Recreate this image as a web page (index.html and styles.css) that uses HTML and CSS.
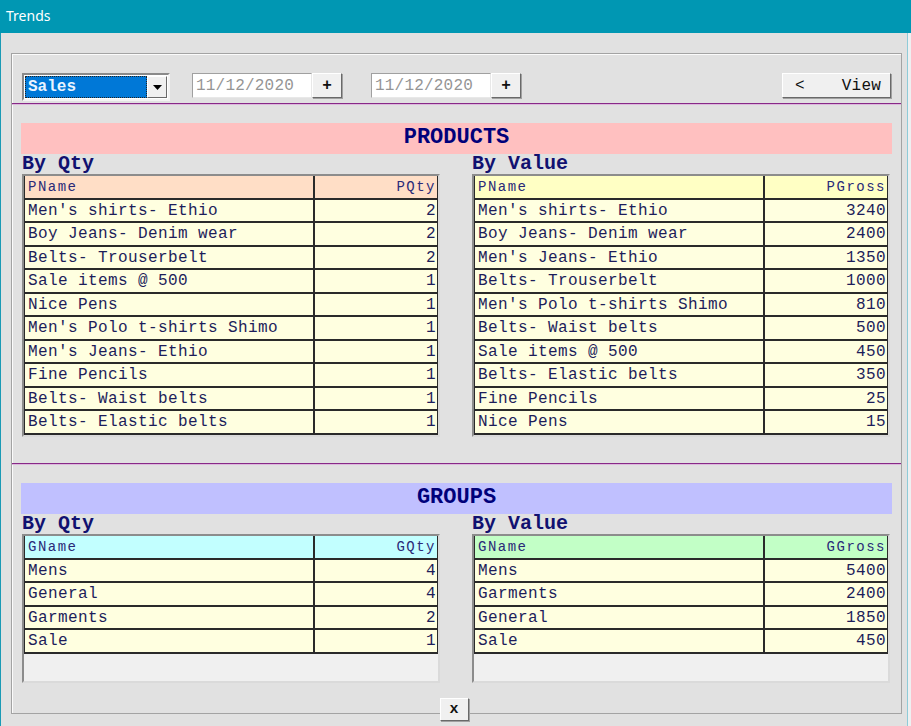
FILE: index.html
```html
<!DOCTYPE html>
<html lang="en">
  <head>
    <meta charset="UTF-8" />
    <title>Trends</title>
    <link rel="stylesheet" href="styles.css">
  </head>
  <body>
    <div class="window">
      <div class="titlebar">Trends</div>

      <div class="client">
        <div class="frame">
          <!-- Toolbar -->
          <div class="toolbar">
            <div class="combo">
              <span class="combo-text">Sales</span>
              <span class="combo-btn">
                <svg width="9" height="5" viewBox="0 0 9 5"><path d="M0 0h9L4.5 5z" fill="#000"/></svg>
              </span>
            </div>
            <div class="date-group">
              <span class="date">11/12/2020</span>
              <button class="btn plus">+</button>
            </div>
            <div class="date-group">
              <span class="date">11/12/2020</span>
              <button class="btn plus">+</button>
            </div>
            <button class="btn view"><span>&lt;</span><span>View</span></button>
          </div>

          <div class="rule"></div>

          <!-- Products -->
          <div class="banner banner-products">PRODUCTS</div>
          <div class="pair">
            <div class="panel">
              <div class="label">By Qty</div>
              <div class="grid grid-products">
                <div class="row head head-peach"><span>PName</span><span>PQty</span></div>
                <div class="row"><span>Men's shirts- Ethio</span><span>2</span></div>
                <div class="row"><span>Boy Jeans- Denim wear</span><span>2</span></div>
                <div class="row"><span>Belts- Trouserbelt</span><span>2</span></div>
                <div class="row"><span>Sale items @ 500</span><span>1</span></div>
                <div class="row"><span>Nice Pens</span><span>1</span></div>
                <div class="row"><span>Men's Polo t-shirts Shimo</span><span>1</span></div>
                <div class="row"><span>Men's Jeans- Ethio</span><span>1</span></div>
                <div class="row"><span>Fine Pencils</span><span>1</span></div>
                <div class="row"><span>Belts- Waist belts</span><span>1</span></div>
                <div class="row"><span>Belts- Elastic belts</span><span>1</span></div>
              </div>
            </div>
            <div class="panel">
              <div class="label">By Value</div>
              <div class="grid grid-products">
                <div class="row head head-yellow"><span>PName</span><span>PGross</span></div>
                <div class="row"><span>Men's shirts- Ethio</span><span>3240</span></div>
                <div class="row"><span>Boy Jeans- Denim wear</span><span>2400</span></div>
                <div class="row"><span>Men's Jeans- Ethio</span><span>1350</span></div>
                <div class="row"><span>Belts- Trouserbelt</span><span>1000</span></div>
                <div class="row"><span>Men's Polo t-shirts Shimo</span><span>810</span></div>
                <div class="row"><span>Belts- Waist belts</span><span>500</span></div>
                <div class="row"><span>Sale items @ 500</span><span>450</span></div>
                <div class="row"><span>Belts- Elastic belts</span><span>350</span></div>
                <div class="row"><span>Fine Pencils</span><span>25</span></div>
                <div class="row"><span>Nice Pens</span><span>15</span></div>
              </div>
            </div>
          </div>

          <div class="rule rule-mid"></div>

          <!-- Groups -->
          <div class="banner banner-groups">GROUPS</div>
          <div class="pair">
            <div class="panel">
              <div class="label">By Qty</div>
              <div class="grid grid-groups">
                <div class="row head head-cyan"><span>GName</span><span>GQty</span></div>
                <div class="row"><span>Mens</span><span>4</span></div>
                <div class="row"><span>General</span><span>4</span></div>
                <div class="row"><span>Garments</span><span>2</span></div>
                <div class="row"><span>Sale</span><span>1</span></div>
              </div>
            </div>
            <div class="panel">
              <div class="label">By Value</div>
              <div class="grid grid-groups">
                <div class="row head head-green"><span>GName</span><span>GGross</span></div>
                <div class="row"><span>Mens</span><span>5400</span></div>
                <div class="row"><span>Garments</span><span>2400</span></div>
                <div class="row"><span>General</span><span>1850</span></div>
                <div class="row"><span>Sale</span><span>450</span></div>
              </div>
            </div>
          </div>
        </div>

        <button class="btn close">x</button>
      </div>
    </div>
  </body>
</html>
```

FILE: styles.css
```css
* {
  margin: 0;
  padding: 0;
  box-sizing: border-box;
}

body {
  background: #eef0f1;
  font-family: "Courier New", "Nimbus Mono PS", "FreeMono", "Liberation Mono", monospace;
  overflow: hidden;
}

.window {
  width: 908px;
  height: 726px;
  background: #e1e1e1;
  border-left: 1px solid #1a9ab5;
  border-right: 1px solid #8fcbd8;
}

/* Title bar */
.titlebar {
  height: 33px;
  margin-left: -1px;
  width: 911px;
  background: #0097b3;
  color: #fff;
  font-family: "Noto Sans", "Open Sans", sans-serif;
  font-size: 14px;
  line-height: 32px;
  padding-left: 6px;
}

.client {
  display: flex;
  flex-direction: column;
  align-items: center;
}

/* Group frame */
.frame {
  align-self: flex-start;
  margin: 20px 0 0 10px;
  width: 891px;
  height: 661px;
  border: 1px solid #a3a3a3;
  box-shadow: inset 1px 1px 0 #fbfbfb;
  padding: 19px 10px 0 10px;
}

/* Toolbar */
.toolbar {
  display: flex;
  align-items: flex-start;
  height: 28px;
}

.combo {
  display: flex;
  width: 148px;
  height: 28px;
  border: 2px solid;
  border-color: #8a8a8a #f4f4f4 #f4f4f4 #8a8a8a;
  background: #fff;
  padding: 1px;
}

.combo-text {
  flex: 1;
  background: #0078d7;
  color: #eaf4ff;
  font-weight: bold;
  font-size: 16px;
  line-height: 23px;
  padding-left: 3px;
  outline: 1px dotted #222;
  outline-offset: -1px;
}

.combo-btn {
  width: 20px;
  display: flex;
  align-items: center;
  justify-content: center;
  background: #f0f0f0;
  border: 1px solid;
  border-color: #fff #6a6a6a #6a6a6a #fff;
}

.date-group {
  display: flex;
  margin-left: 22px;
}

.date-group + .date-group {
  margin-left: 29px;
}

.date {
  width: 120px;
  height: 25px;
  background: #fff;
  border: 1px solid;
  border-color: #a0a0a0 #e8e8e8 #e8e8e8 #a0a0a0;
  color: #959595;
  font-size: 16px;
  line-height: 25px;
  padding-left: 3px;
  letter-spacing: 0.2px;
}

.btn {
  font-family: "Courier New", "Nimbus Mono PS", "FreeMono", "Liberation Mono", monospace;
  background: #f0f0f0;
  border: 1px solid;
  border-color: #fff #696969 #696969 #fff;
  box-shadow: 1px 1px 0 #a0a0a0;
  color: #111;
  cursor: default;
}

.plus {
  width: 30px;
  height: 25px;
  font-size: 16px;
  font-weight: bold;
}

.view {
  margin-left: auto;
  width: 109px;
  height: 25px;
  display: flex;
  justify-content: space-between;
  align-items: center;
  padding: 0 9px 0 12px;
  font-size: 16px;
  letter-spacing: 0.2px;
}

.rule {
  margin: 2px -10px 0;
  height: 2px;
  border-top: 1px solid #872987;
  border-bottom: 1px solid #dcb8dc;
}

.rule-mid {
  margin-top: 26px;
}

/* Section banners */
.banner {
  margin: 18px -1px 0;
  height: 31px;
  text-align: center;
  color: #00007a;
  font-weight: bold;
  font-size: 22px;
  line-height: 30px;
}

.banner-products {
  background: #ffc0c0;
}

.banner-groups {
  background: #c0c0ff;
}

.pair {
  display: grid;
  grid-template-columns: 418px 418px;
  column-gap: 32px;
}

.label {
  height: 20px;
  color: #111170;
  font-weight: bold;
  font-size: 20px;
  line-height: 20px;
}

/* Data grids */
.grid {
  border: 2px solid;
  border-color: #8c8c8c #dadada #dadada #8c8c8c;
  background: #f0f0f0;
}

.grid-products {
  height: 263px;
}

.grid-groups {
  height: 149px;
}

.row {
  display: grid;
  grid-template-columns: 290px 1fr;
  height: 23.5px;
  background: #ffffe0;
  color: #1d1d5a;
  font-size: 16px;
  letter-spacing: 0.4px;
  line-height: 22px;
  border-left: 1px solid #2a2a2a;
  border-right: 1px solid #2a2a2a;
  border-bottom: 2px solid #2a2a2a;
}

.row span:first-child {
  padding-left: 3px;
  border-right: 2px solid #2a2a2a;
  white-space: nowrap;
}

.row span:last-child {
  text-align: right;
  padding-right: 1px;
}

.head {
  font-size: 14px;
  letter-spacing: 1.5px;
  color: #2a2a78;
}

.head-peach {
  background: #ffdec6;
}

.head-yellow {
  background: #ffffc4;
}

.head-cyan {
  background: #c2ffff;
}

.head-green {
  background: #c2ffc6;
}

/* Close button straddles the frame edge */
.close {
  margin-top: -16px;
  width: 29px;
  height: 23px;
  font-size: 15px;
  font-weight: bold;
  position: relative;
}
```
